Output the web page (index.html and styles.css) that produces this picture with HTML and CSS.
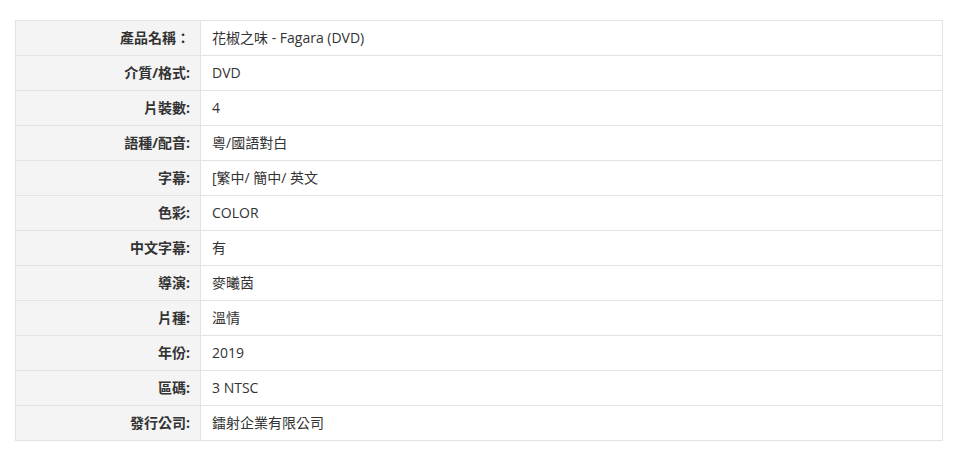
FILE: index.html
```html
<!DOCTYPE html>
<html lang="zh-Hant">
<head>
<meta charset="utf-8">
<link rel="stylesheet" href="styles.css">
</head>
<body>
<div class="wrap">
<table class="spec">
<tbody>
<tr><th>產品名稱：</th><td>花椒之味 - Fagara (DVD)</td></tr>
<tr><th>介質/格式:</th><td>DVD</td></tr>
<tr><th>片裝數:</th><td>4</td></tr>
<tr><th>語種/配音:</th><td>粵/國語對白</td></tr>
<tr><th>字幕:</th><td>[繁中/ 簡中/ 英文</td></tr>
<tr><th>色彩:</th><td>COLOR</td></tr>
<tr><th>中文字幕:</th><td>有</td></tr>
<tr><th>導演:</th><td>麥曦茵</td></tr>
<tr><th>片種:</th><td>溫情</td></tr>
<tr><th>年份:</th><td>2019</td></tr>
<tr><th>區碼:</th><td>3 NTSC</td></tr>
<tr><th>發行公司:</th><td>鐳射企業有限公司</td></tr>
</tbody>
</table>
</div>
</body>
</html>
```
FILE: styles.css
```css
html, body {
  margin: 0;
  padding: 0;
  background: #ffffff;
}
.wrap {
  padding: 20px 0 0 15px;
}
.spec {
  width: 928px;
  border-collapse: collapse;
  font-family: "Open Sans", "Noto Sans CJK TC", sans-serif;
  font-size: 14px;
  color: #333333;
}
.spec th, .spec td {
  height: 34px;
  padding: 0;
  border: 1px solid #e3e3e3;
  vertical-align: middle;
  line-height: 20px;
}
.spec th {
  width: 174px;
  padding-right: 10px;
  text-align: right;
  font-weight: bold;
  background: #f4f4f4;
}
.spec td {
  padding-left: 11px;
  text-align: left;
  font-weight: normal;
  background: #ffffff;
}
```
